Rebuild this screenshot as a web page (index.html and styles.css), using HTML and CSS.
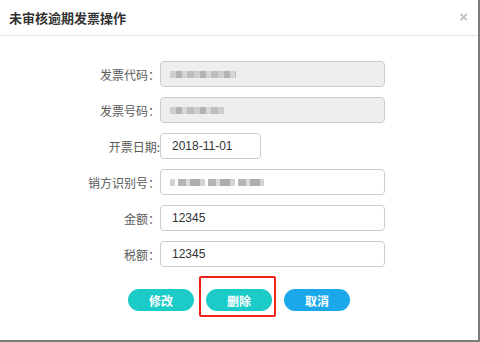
FILE: index.html
```html
<!doctype html>
<html>
<head>
    <meta charset="utf-8">
    <title>未审核逾期发票操作</title>
    <link rel="stylesheet" href="styles.css">
</head>
<body>
    <div class="modal">
        <div class="modal-header">
            <h3 class="modal-title">未审核逾期发票操作</h3>
            <span class="modal-close">&times;</span>
        </div>
        <form class="invoice-form">
            <div class="form-row">
                <label class="form-label">发票代码：</label>
                <div class="form-field is-disabled"><span class="masked masked-code"></span></div>
            </div>
            <div class="form-row">
                <label class="form-label">发票号码：</label>
                <div class="form-field is-disabled"><span class="masked masked-number"></span></div>
            </div>
            <div class="form-row">
                <label class="form-label" for="date">开票日期:</label>
                <input class="form-field is-short" type="text" id="date" value="2018-11-01">
            </div>
            <div class="form-row">
                <label class="form-label">销方识别号：</label>
                <div class="form-field"><span class="masked masked-tax-id"></span></div>
            </div>
            <div class="form-row">
                <label class="form-label" for="amount">金额：</label>
                <input class="form-field" type="text" id="amount" value="12345">
            </div>
            <div class="form-row">
                <label class="form-label" for="tax">税额：</label>
                <input class="form-field" type="text" id="tax" value="12345">
            </div>
            <div class="form-actions">
                <button type="button" class="btn btn-teal">修改</button>
                <span class="highlight"><button type="button" class="btn btn-teal">删除</button></span>
                <button type="button" class="btn btn-blue">取消</button>
            </div>
        </form>
    </div>
</body>
</html>
```

FILE: styles.css
```css
html, body {
    margin: 0;
    padding: 0;
    background-color: #ffffff;
}
body {
    font-family: "Liberation Sans", "Noto Sans CJK SC", sans-serif;
    color: #333333;
}
.modal {
    box-sizing: border-box;
    width: 480px;
    height: 342px;
    border-right: 2px solid #7b7b7b;
    border-bottom: 2px solid #7b7b7b;
    background-color: #ffffff;
}
.modal-header {
    display: flex;
    align-items: center;
    justify-content: space-between;
    height: 35px;
    padding: 0 10px 0 9px;
    border-bottom: 1px solid #e5e5e5;
}
.modal-title {
    margin: 0;
    font-family: "Noto Sans CJK SC", sans-serif;
    font-size: 13px;
    font-weight: bold;
    color: #333333;
}
.modal-close {
    margin-top: -3px;
    font-family: "Liberation Sans", sans-serif;
    font-size: 15px;
    font-weight: bold;
    color: #c0c0c0;
}
.invoice-form {
    display: flex;
    flex-direction: column;
    gap: 10px;
    padding-top: 25px;
}
.form-row {
    display: flex;
    align-items: center;
    height: 26px;
}
.form-label {
    width: 160px;
    text-align: right;
    font-family: "Noto Sans CJK SC", sans-serif;
    font-size: 12px;
    color: #5a5a5a;
}
.form-field {
    box-sizing: border-box;
    display: flex;
    align-items: center;
    width: 225px;
    height: 26px;
    margin: 0;
    padding: 0 11px;
    border: 1px solid #cccccc;
    border-radius: 4px;
    background-color: #ffffff;
    font-family: "Liberation Sans", sans-serif;
    font-size: 12px;
    color: #333333;
    outline: none;
}
.form-field.is-disabled {
    background-color: #eeeeee;
}
.form-field.is-short {
    width: 101px;
}
/* pixelated, blurred values in the original screenshot */
.masked {
    display: block;
    height: 7px;
    margin-left: -2px;
    background: repeating-linear-gradient(90deg, #c9c9c9 0 6px, #aaaaaa 6px 12px, #d2d2d2 12px 17px, #b5b5b5 17px 24px);
    filter: blur(0.5px);
    opacity: 0.85;
}
.masked-code {
    width: 66px;
}
.masked-number {
    width: 54px;
}
.masked-tax-id {
    width: 94px;
    background: repeating-linear-gradient(90deg, #cccccc 0 5px, #ffffff 5px 8px, #a9a9a9 8px 16px, #d4d4d4 16px 20px, #9f9f9f 20px 30px);
}
.form-actions {
    display: flex;
    justify-content: center;
    gap: 12px;
    margin-top: 12px;
}
.btn {
    width: 66px;
    height: 22px;
    padding: 0;
    border: none;
    border-radius: 11px;
    font-family: "Noto Sans CJK SC", sans-serif;
    font-size: 12px;
    font-weight: bold;
    color: #ffffff;
    cursor: pointer;
}
.btn-teal {
    background-color: #1bcbc7;
}
.btn-blue {
    background-color: #1ba8ea;
}
.highlight {
    position: relative;
    display: flex;
}
.highlight::after {
    content: "";
    position: absolute;
    top: -13px;
    left: -7px;
    right: -4px;
    bottom: -6px;
    border: 2px solid #f2201b;
    border-radius: 2px;
    pointer-events: none;
}
```
